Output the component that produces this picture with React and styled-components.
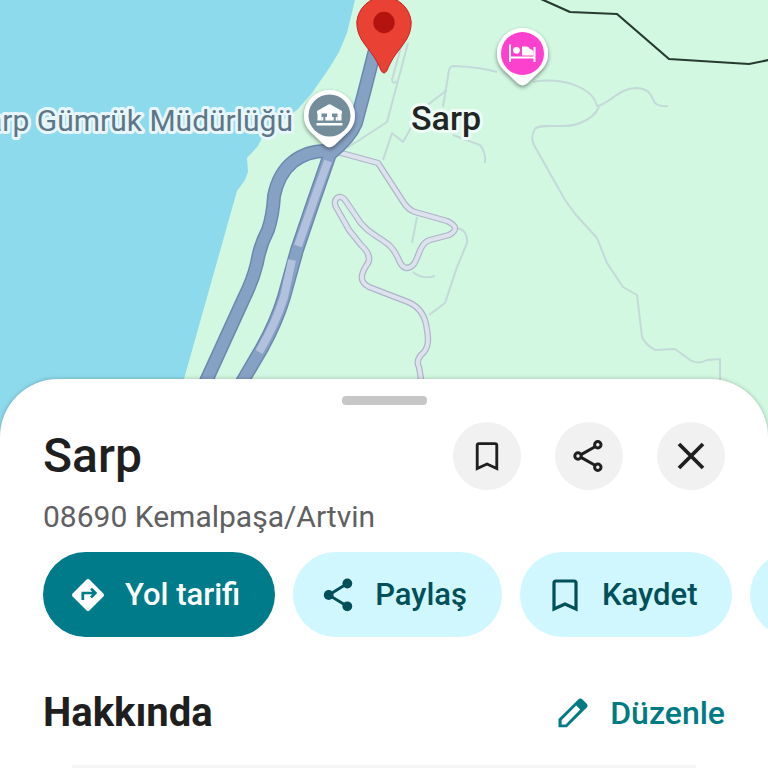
import React from "react"
import styled, { createGlobalStyle } from "styled-components"

const GlobalStyle = createGlobalStyle`
  * {
    box-sizing: border-box;
  }
  body {
    margin: 0;
    background: #fff;
    color: #1f1f1f;
    font-family: Roboto, "Noto Sans", sans-serif;
  }
  button {
    font: inherit;
    border: 0;
    cursor: pointer;
  }
`

const BookmarkIcon = ({ size = 36 }) => (
  <Icon viewBox="0 0 36 36" $size={size}>
    <path d="M7 32V6a2 2 0 0 1 2-2h18a2 2 0 0 1 2 2v26l-11-5z" fill="none" stroke="currentColor" strokeWidth="3.2" />
  </Icon>
)

const ShareIcon = () => (
  <Icon viewBox="0 0 36 36" $size={36}>
    <path d="M27.3 6.5 8.7 18l18.6 11.3" fill="none" stroke="currentColor" strokeWidth="2.8" />
    <g fill="currentColor">
      <circle cx="8.7" cy="18" r="4.9" />
      <circle cx="27.3" cy="6.5" r="4.9" />
      <circle cx="27.3" cy="29.3" r="4.9" />
    </g>
  </Icon>
)

const ShareOutlineIcon = () => (
  <Icon viewBox="0 0 36 36" $size={36}>
    <g fill="none" stroke="currentColor" strokeWidth="3">
      <path d="M24 8.8 10 16.6M10 19.4l14 7.8" />
      <circle cx="7" cy="18" r="3.2" />
      <circle cx="26.8" cy="6.8" r="3.2" />
      <circle cx="26.8" cy="29.2" r="3.2" />
    </g>
  </Icon>
)

const CloseIcon = () => (
  <Icon viewBox="0 0 36 36" $size={36}>
    <path d="m6 6 24 24M30 6 6 30" fill="none" stroke="currentColor" strokeWidth="3.8" />
  </Icon>
)

const DirectionsIcon = () => (
  <Icon viewBox="0 0 36 36" $size={36}>
    <path
      d="M16.6 2.6a2 2 0 0 1 2.8 0l14 14a2 2 0 0 1 0 2.8l-14 14a2 2 0 0 1-2.8 0l-14-14a2 2 0 0 1 0-2.8z"
      fill="currentColor"
    />
    <path d="M12.8 23v-7H25M21 11.6l4.4 4.4-4.4 4.4" fill="none" stroke="#007b8a" strokeWidth="2.7" />
  </Icon>
)

const PencilIcon = () => (
  <Icon viewBox="0 0 36 36" $size={36}>
    <path
      d="M3.5 32.3V24L23.3 4.6a3 3 0 0 1 4.2 0l4 4a3 3 0 0 1 0 4.2L11.8 32.3zM6.6 29.4h4.1l14.5-14.8-4-4L6.6 25.3z"
      fill="currentColor"
      fillRule="evenodd"
    />
  </Icon>
)

const lanes = [
  "M408 43 387 122 347 148M402 43 392 80Q393 85 397 81M383 160 392 133 403 142 421 110 447 90",
  "M443 107 449 70Q450 66 454 66Q480 67 497 72M533 82C560 77 592 86 597 106C610 104 618 88 637 88C660 90 645 108 668 106",
  "M599 107Q594 118 580 123C566 130 540 122 535 129Q530 137 534 145L565 200 576 215 597 238 607 263 623 287 637 295 642 337Q645 344 655 350L675 349 690 360Q698 365 707 360L720 359 V385",
  "M453 135 480 145Q486 152 485 163M417 217 412 243M457 228Q468 230 467 243L457 267 445 303 429 315M413 272Q422 280 435 276",
]
const winding =
  "M334 151 378 163 402 200Q408 210 415 212L447 221Q462 228 449 235L430 240C416 244 420 268 406 268C398 266 400 255 389 245C378 236 364 231 356 216L345 200C340 193 332 199 336 207L349 230L361 245Q374 257 366 266C360 276 360 282 369 287L408 302Q425 309 427 330Q430 345 424 352Q415 360 419 367L422 385"
const highway = "M378 38 364 93 356 123Q350 138 330 154L314 200 297 250 284 297Q276 323 262 348L235 394"
const coastRoad = "M329 151C300 150 280 166 274 196Q273 215 268 230Q260 245 257 263Q253 280 244 298L207 379 200 394"

const RegionMap = () => (
  <MapCanvas viewBox="0 0 768 440" preserveAspectRatio="xMidYMin slice" role="img" aria-label="Sarp">
    <defs>
      <filter id="pinShadow" x="-30%" y="-30%" width="160%" height="160%">
        <feDropShadow dx="0" dy="2" stdDeviation="2" floodOpacity="0.45" />
      </filter>
    </defs>
    <rect width="768" height="440" fill="#d2f8e2" />
    <path
      d="M0 0H355L347 33 339 52 330 67 312 93 297 110 264 134 258 146 247 158 248 172 245 180 240 187 237 191 184 379 166 440H0z"
      fill="#8edaed"
    />
    <g fill="none" strokeLinejoin="round">
      {lanes.map((d) => (
        <path key={d} d={d} stroke="#c3dad9" strokeWidth="2" />
      ))}
      <path d={winding} stroke="#b0b4ca" strokeWidth="6.4" />
      <path d={winding} stroke="#dce3ec" strokeWidth="4" />
      <path d={highway} stroke="#6c88ad" strokeWidth="14" />
      <path d={coastRoad} stroke="#6c88ad" strokeWidth="14" />
      <path d={highway} stroke="#87a1c4" strokeWidth="11" />
      <path d={coastRoad} stroke="#87a1c4" strokeWidth="11" />
      <path d="M328 161 314 200 298 246M292 260 284 297Q276 323 259 352" stroke="#b2c2de" strokeWidth="8" />
      <path d="M541 -1 570 12 617 14 669 59 749 64 769 60" stroke="#263a30" strokeWidth="2.2" />
    </g>
    <MapLabel x="293" y="131" textAnchor="end" $color="#5f7686" $size={30}>
      Sarp Gümrük Müdürlüğü
    </MapLabel>
    <MapLabel x="446" y="130" textAnchor="middle" $color="#202624" $size={34} $bold>
      Sarp
    </MapLabel>
    <g transform="translate(329.5 115.5)">
      <path
        d="M-25.5 0A25.5 25.5 0 0 1 25.5 0C25.5 9 21 15 15 20L5 29.5Q0 34 -5 29.5L-15 20C-21 15-25.5 9-25.5 0z"
        fill="#fff"
        filter="url(#pinShadow)"
      />
      <circle r="21" fill="#738d9a" />
      {/* customs house: roof and beam, three columns, base */}
      <path d="M-12.5-4.5-1-11Q0-11.5 1-11L12.5-4.5V-2H-12.5z" fill="#fff" />
      <path d="M-12-2.5H-8V5H-12zM-2.5-2.5H2.5V5H-2.5zM8-2.5H12V5H8zM-13 7.5H13V10H-13z" fill="#fff" />
      <path d="M-8 1.5H-6.2V5H-8zM-4.2 1.5H-2.5V5H-4.2zM2.5 1.5H4.2V5H2.5zM6.2 1.5H8V5H6.2z" fill="#fff" />
    </g>
    <g transform="translate(522.5 53.5)">
      <path
        d="M-25.5 0A25.5 25.5 0 0 1 25.5 0C25.5 9 21 15 15 20L5 29.5Q0 34 -5 29.5L-15 20C-21 15-25.5 9-25.5 0z"
        fill="#fff"
        filter="url(#pinShadow)"
      />
      <circle r="21.5" fill="#fb41cd" />
      <path d="M-12.5-9V8.5M12-6.5V8.5M-12 4H12" stroke="#fff" strokeWidth="2" />
      <circle cx="-6" cy="-3.2" r="3.4" fill="#fff" />
      <path d="M-.5 2V-7H4Q6-7 7-5L11-2.5V2z" fill="#fff" />
    </g>
    <path
      d="M356.8 22a27.3 27.3 0 0 1 54.4 0c0 13-6 20-13 29c-6 8-8 12-11 19q-3.2 6-6.4 0c-3-7-5-11-11-19c-7-9-13-16-13-29z"
      fill="#ea4135"
      stroke="#c5221f"
    />
    <circle cx="384" cy="22.5" r="10.7" fill="#b31410" />
  </MapCanvas>
)

const chips = [
  { label: "Yol tarifi", icon: <DirectionsIcon />, primary: true },
  { label: "Paylaş", icon: <ShareIcon /> },
  { label: "Kaydet", icon: <BookmarkIcon /> },
]

const App = () => {
  return (
    <>
      <GlobalStyle />
      <Screen>
        <RegionMap />
        <Sheet>
          <Handle />
          <Header>
            <Title>Sarp</Title>
            <Actions>
              <RoundButton aria-label="Kaydet">
                <BookmarkIcon size={32} />
              </RoundButton>
              <RoundButton aria-label="Paylaş">
                <ShareOutlineIcon />
              </RoundButton>
              <RoundButton aria-label="Kapat">
                <CloseIcon />
              </RoundButton>
            </Actions>
          </Header>
          <Address>08690 Kemalpaşa/Artvin</Address>
          <ChipRow>
            {chips.map(({ label, icon, primary }) => (
              <Chip key={label} $primary={primary}>
                {icon}
                {label}
              </Chip>
            ))}
            <Chip aria-label="Diğer">
              <ShareIcon />
            </Chip>
          </ChipRow>
          <SectionHeader>
            <SectionTitle>Hakkında</SectionTitle>
            <EditButton>
              <PencilIcon />
              Düzenle
            </EditButton>
          </SectionHeader>
          <Divider />
        </Sheet>
      </Screen>
    </>
  )
}
export default App

const Icon = styled.svg.attrs({ "aria-hidden": true })`
  display: block;
  flex: none;
  width: ${({ $size }) => $size}px;
  height: ${({ $size }) => $size}px;
`

const Screen = styled.main`
  display: flex;
  flex-direction: column;
  height: 100vh;
  overflow: hidden;
`

const MapCanvas = styled.svg`
  display: block;
  flex: none;
  width: 100%;
  height: 440px;
`

const MapLabel = styled.text`
  fill: ${({ $color }) => $color};
  font-size: ${({ $size }) => $size}px;
  font-weight: ${({ $bold }) => ($bold ? 500 : 400)};
  stroke: ${({ $bold }) => ($bold ? "#effcf5" : "#e6f6fb")};
  stroke-width: 6px;
  stroke-linejoin: round;
  paint-order: stroke;
`

const Sheet = styled.section`
  position: relative;
  flex: 1;
  margin-top: -61px;
  padding-top: 17px;
  border-radius: 58px 58px 0 0;
  background: #fff;
  box-shadow: 0 0 4px rgba(0, 0, 0, 0.25);
`

const Handle = styled.div`
  width: 85px;
  height: 9px;
  margin: 0 auto;
  border-radius: 4px;
  background: #c6c6c6;
`

const Header = styled.header`
  display: flex;
  align-items: center;
  justify-content: space-between;
  padding: 17px 43px 0;
`

const Title = styled.h1`
  margin: 0;
  font-size: 48px;
  font-weight: 500;
  line-height: 68px;
`

const Actions = styled.div`
  display: flex;
  gap: 34px;
`

const RoundButton = styled.button`
  display: flex;
  align-items: center;
  justify-content: center;
  width: 68px;
  height: 68px;
  padding: 0;
  border-radius: 50%;
  background: #f1f1f1;
  color: #1f1f1f;
`

const Address = styled.p`
  margin: 8px 43px 16px;
  color: #5f6062;
  font-size: 30px;
  line-height: 38px;
`

const ChipRow = styled.div`
  display: flex;
  gap: 18px;
  padding: 0 43px;
  overflow-x: auto;
  scrollbar-width: none;
`

const Chip = styled.button`
  display: flex;
  flex: none;
  align-items: center;
  gap: 19px;
  height: 85px;
  padding: 0 35px 0 27px;
  border-radius: 43px;
  background: ${({ $primary }) => ($primary ? "#007b8a" : "#d0f6fe")};
  color: ${({ $primary }) => ($primary ? "#fff" : "#004f59")};
  font-size: 31px;
  font-weight: 500;
  white-space: nowrap;
`

const SectionHeader = styled.div`
  display: flex;
  align-items: center;
  justify-content: space-between;
  padding: 52px 43px 28px;
`

const SectionTitle = styled.h2`
  margin: 0;
  font-size: 40px;
  font-weight: 700;
  line-height: 48px;
`

const EditButton = styled.button`
  display: flex;
  align-items: center;
  gap: 19px;
  padding: 0;
  background: none;
  color: #007b84;
  font-size: 32px;
  font-weight: 500;
`

const Divider = styled.hr`
  height: 4px;
  margin: 0 72px;
  border: 0;
  background: #f4f5f5;
`
